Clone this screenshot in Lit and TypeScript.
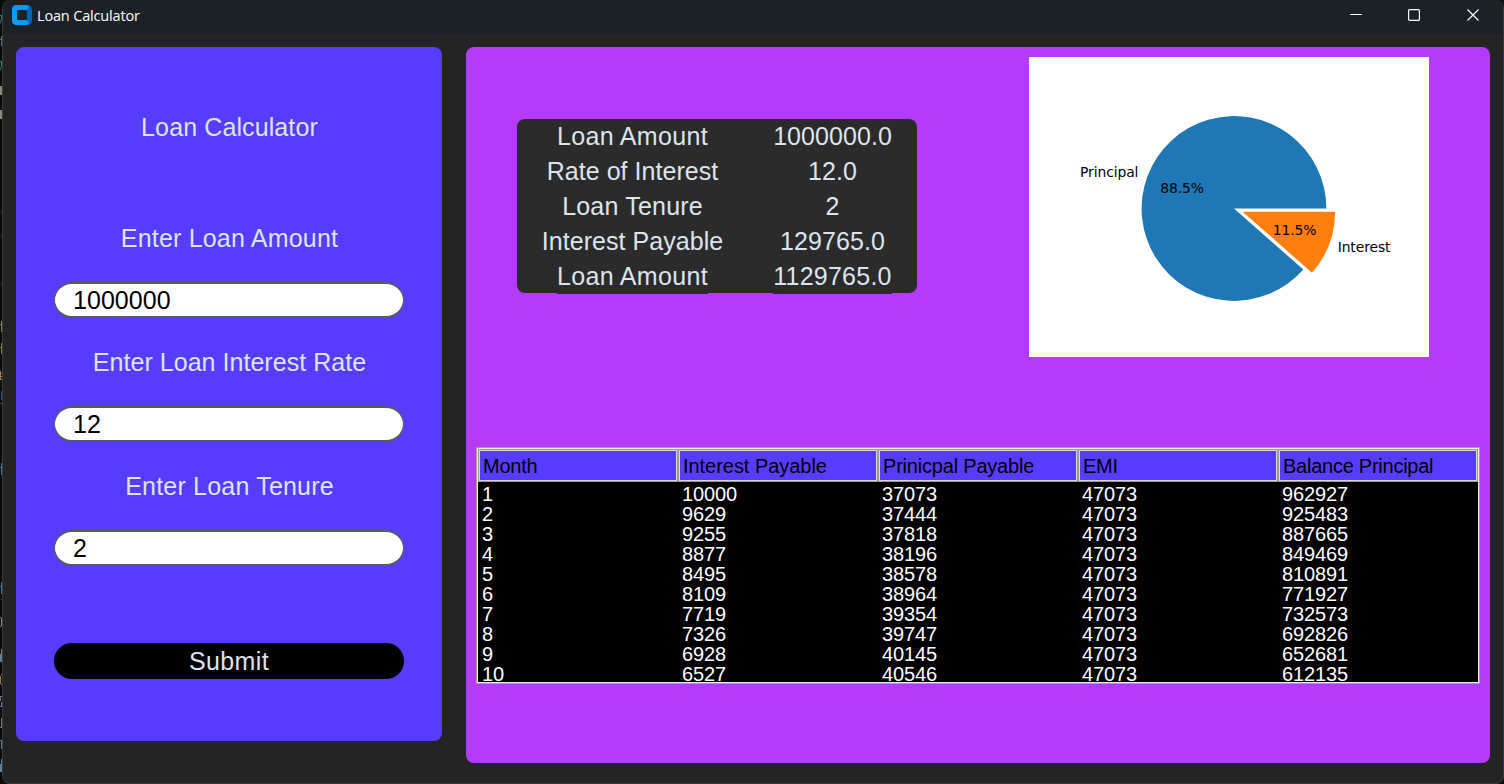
import { LitElement, html, css, svg } from "lit";
import { customElement, property } from "lit/decorators.js";

const ROWS: number[][] = [
  [1, 10000, 37073, 47073, 962927],
  [2, 9629, 37444, 47073, 925483],
  [3, 9255, 37818, 47073, 887665],
  [4, 8877, 38196, 47073, 849469],
  [5, 8495, 38578, 47073, 810891],
  [6, 8109, 38964, 47073, 771927],
  [7, 7719, 39354, 47073, 732573],
  [8, 7326, 39747, 47073, 692826],
  [9, 6928, 40145, 47073, 652681],
  [10, 6527, 40546, 47073, 612135],
];
const COLUMNS = ["Month", "Interest Payable", "Prinicpal Payable", "EMI", "Balance Principal"];
const SUMMARY = [
  ["Loan Amount", "1000000.0"],
  ["Rate of Interest", "12.0"],
  ["Loan Tenure", "2"],
  ["Interest Payable", "129765.0"],
  ["Loan Amount", "1129765.0"],
];
const FIELDS = [
  ["Enter Loan Amount", "1000000"],
  ["Enter Loan Interest Rate", "12"],
  ["Enter Loan Tenure", "2"],
];

// Slivers of the editor window behind: path, colour
const SLIVERS: [string, string][] = [
  ["M0 15.5H2M1.5 16V19L0 23.5", "#2f7f80"],
  ["M0 39.5H2M1.5 36V46", "#5b7286"],
  ["M0 61.5H2M1.5 62V66L0 70.5", "#2f7f80"],
  ["M0 86.5H2M.5 86V95M1.5 87V95", "#8d8a7a"],
  ["M0 110.5H2M.5 110V119M1.5 111V119", "#8d8a7a"],
  ["M1 212.5H2M1 236.5H2M1 283.5H2", "#27527c"],
  ["M0 324.5H2M1.5 321V332", "#8b784e"],
  ["M0 347.5H2M1.5 343V354", "#8b784e"],
  ["M.5 371V380M1 373.5H2M0 376.5H2M1 379.5H2", "#9a7f50"],
  ["M1.5 391V400M0 403.5H2", "#2d4f80"],
  ["M0 467.5H2M1.5 463V475", "#3f6f98"],
  ["M0 586.5H2M1.5 582V594", "#3f6f98"],
  ["M0 599.5H2", "#2a2a2a"],
  ["M0 617.5H1M1.5 618V626M0 626.5H1", "#9a886b"],
  ["M1.5 649V662M.5 654V662", "#657f95"],
  ["M.5 676V684M1 674.5H2M1 684.5H2", "#9a7f50"],
  ["M0 696.5H2M.5 697V701M1.5 702V706M0 706.5H2", "#707798"],
  ["M1.5 718V728M0 727.5H2", "#657f95"],
  ["M1.5 740V749M0 740.5H2", "#657f95"],
  ["M1.5 759V772M.5 764V772", "#657f95"],
];

@customElement("title-bar")
export class TitleBar extends LitElement {
  static styles = css`
    :host {
      display: flex;
      height: 34px;
      background: #1c2127;
      color: #fff;
      font: 14.5px/20px "Open Sans", "Noto Sans", sans-serif;
    }
    .logo { width: 20px; height: 20px; margin: 5px 5px 0 9px; flex: none; }
    .name { flex: 1; margin-top: 6px; letter-spacing: -0.16px; }
    .controls { display: flex; gap: 46px; margin: 9px 24px 0 0; }
    .controls svg { width: 12px; height: 12px; }
    .controls .close { margin-left: 1px; }
  `;
  render() {
    return html`
      <svg class="logo" viewBox="0 0 20 20">
        <rect width="20" height="20" rx="4.5" fill="#0460b3" />
        <path d="M4.5 0H14.5a2.2 2.2 0 0 1 2 3.2V16.8a2.2 2.2 0 0 1-2 3.2H4.5A4.5 4.5 0 0 1 0 15.5V4.5A4.5 4.5 0 0 1 4.5 0Z" fill="#079bff" />
        <path d="M14.5 4.5L16.5 3V17L14.5 15.5Z" fill="#0460b3" />
        <rect x="5" y="5" width="10" height="10" rx="1.5" fill="#1d2228" />
      </svg>
      <span class="name">Loan Calculator</span>
      <div class="controls">
        <svg viewBox="0 0 12 12"><path d="M0 5.5H12" stroke="#fff" /></svg>
        <svg viewBox="0 0 12 12"><rect x=".6" y=".6" width="10.8" height="10.8" rx="1" fill="none" stroke="#fff" stroke-width="1.2" /></svg>
        <svg class="close" viewBox="0 0 12 12"><path d="M.5.5L11.5 11.5M11.5.5L.5 11.5" stroke="#fff" stroke-width="1.15" /></svg>
      </div>
    `;
  }
}

@customElement("loan-form")
export class LoanForm extends LitElement {
  static styles = css`
    :host {
      display: flex;
      flex-direction: column;
      box-sizing: border-box;
      width: 426px;
      height: 694px;
      padding: 66px 38px 0;
      border-radius: 8px;
      background: #573dfb;
      color: #dce4ee;
      font: 25px/28px "Liberation Sans", Arial, sans-serif;
      text-align: center;
    }
    .heading { margin-bottom: 83px; padding-left: 1px; letter-spacing: 0.11px; }
    .fields { display: flex; flex-direction: column; gap: 30px; }
    .field { display: flex; flex-direction: column; gap: 30px; letter-spacing: 0.2px; }
    .field:nth-child(2) { letter-spacing: 0.04px; }
    .label { padding-left: 1px; }
    .entry {
      box-sizing: border-box;
      width: 350px;
      height: 36px;
      border: 2px solid #565b5e;
      border-left-width: 1px;
      border-right-width: 1px;
      border-radius: 18px;
      padding: 0 18px;
      background: #fff;
      color: #000;
      font: 25px/32px "Liberation Sans", Arial, sans-serif;
      letter-spacing: 0.05px;
      outline: none;
    }
    .submit {
      height: 36px;
      margin-top: 77px;
      border: 0;
      border-radius: 18px;
      padding: 0;
      background: #000;
      color: #dce4ee;
      font: 25px/36px "Liberation Sans", Arial, sans-serif;
      letter-spacing: 0.4px;
    }
  `;
  render() {
    return html`
      <div class="heading">Loan Calculator</div>
      <div class="fields">
        ${FIELDS.map(
          ([label, value]) => html`<label class="field"><span class="label">${label}</span><input class="entry" .value=${value} /></label>`
        )}
      </div>
      <button class="submit">Submit</button>
    `;
  }
}

@customElement("loan-summary")
export class LoanSummary extends LitElement {
  static styles = css`
    :host {
      display: block;
      width: 400px;
      height: 174px;
      border-radius: 8px;
      background: #2b2b2b;
      color: #dce4ee;
      font: 25px/35px "Liberation Sans", Arial, sans-serif;
    }
    .row { display: grid; grid-template-columns: 231px 169px; justify-items: center; height: 35px; }
    .row:last-child span { background: #2b2b2b; }
    .key { letter-spacing: 0.05px; }
    .row:nth-child(3) .key { letter-spacing: 0.2px; }
    .row:first-child .key, .row:last-child .key { letter-spacing: 0.34px; }
    .value { letter-spacing: 0.06px; }
    .row:last-child .value { letter-spacing: 0.25px; }
  `;
  render() {
    return SUMMARY.map(
      ([k, v]) => html`<div class="row"><span class="key">${k}</span><span class="value">${v}</span></div>`
    );
  }
}

@customElement("share-chart")
export class ShareChart extends LitElement {
  @property({ type: Number }) principal = 1000000;
  @property({ type: Number }) interest = 129765;
  static styles = css`
    :host { display: block; width: 400px; height: 300px; background: #fff; }
    .chart { display: block; width: 400px; height: 300px; }
    .text { font: 13.89px "DejaVu Sans", sans-serif; letter-spacing: -0.1px; fill: #000; }
  `;
  render() {
    const r = 92.4;
    const cx = 205;
    const cy = 151.5;
    const a = (2 * Math.PI * this.interest) / (this.principal + this.interest);
    const ex = cx + 0.1 * r * Math.cos(a / 2);
    const ey = cy + 0.1 * r * Math.sin(a / 2);
    const dx = r * Math.cos(a);
    const dy = r * Math.sin(a);
    return html`<svg class="chart" viewBox="0 0 400 300">
      ${svg`
        <path fill="#1f77b4" d="M${cx} ${cy}H${cx + r}A${r} ${r} 0 1 0 ${cx + dx} ${cy + dy}Z" />
        <path fill="#ff7f0e" d="M${ex} ${ey}H${ex + r}A${r} ${r} 0 0 1 ${ex + dx} ${ey + dy}Z" />
        <text class="text" x="109.3" y="120" text-anchor="end">Principal</text>
        <text class="text" x="153" y="136" text-anchor="middle">88.5%</text>
        <text class="text" x="265.5" y="178" text-anchor="middle">11.5%</text>
        <text class="text" x="308.7" y="195">Interest</text>
      `}
    </svg>`;
  }
}

@customElement("payment-table")
export class PaymentTable extends LitElement {
  static styles = css`
    :host {
      display: block;
      box-sizing: border-box;
      width: 1004px;
      height: 237px;
      border: 1px solid #a09f98;
      background: #000;
      color: #fff;
      font: 20px/20px "Liberation Sans", Arial, sans-serif;
    }
    .inner {
      box-sizing: border-box;
      height: 235px;
      border: 1px solid #f0eee0;
    }
    .row { display: grid; grid-template-columns: repeat(5, 200px); }
    .head { color: #000; margin-bottom: 2px; }
    .hcell {
      box-sizing: border-box;
      height: 33px;
      border: 1px solid #9c9a92;
      box-shadow: inset 0 0 0 1px #dcdad0;
      background: #573dfb;
      padding-left: 4px;
      line-height: 32px;
      letter-spacing: -0.25px;
    }
    .hcell:nth-child(2) { letter-spacing: -0.04px; }
    .hcell:nth-child(3) { letter-spacing: -0.2px; }
    .cell { height: 20px; padding-left: 4px; letter-spacing: -0.12px; }
  `;
  render() {
    return html`<div class="inner">
      <div class="row head">${COLUMNS.map((c) => html`<div class="hcell">${c}</div>`)}</div>
      ${ROWS.map((r) => html`<div class="row">${r.map((v) => html`<div class="cell">${v}</div>`)}</div>`)}
    </div>`;
  }
}

@customElement("app-root")
export class AppRoot extends LitElement {
  static styles = css`
    :host { display: flex; width: 1504px; height: 784px; background: #0b0b0c; overflow: hidden; }
    .behind { width: 2px; height: 784px; flex: none; }
    .window {
      flex: 1;
      box-sizing: border-box;
      height: 784px;
      border: solid #3b3b3c;
      border-width: 0 1px 1px 1px;
      border-radius: 8px;
      background: #242424;
      overflow: hidden;
    }
    .body { display: flex; gap: 24px; padding: 13px 13px 0; align-items: flex-start; }
    .results {
      box-sizing: border-box;
      width: 1024px;
      height: 716px;
      flex: none;
      padding: 10px;
      border-radius: 8px;
      background: #b43bfa;
    }
    .top { display: flex; justify-content: space-between; padding: 0 51px 0 41px; margin-bottom: 90px; }
    .summary { margin-top: 62px; }
  `;
  render() {
    return html`
      <svg class="behind" viewBox="0 0 2 784">
        ${SLIVERS.map(([d, c]) => svg`<path d=${d} stroke=${c} fill="none" />`)}
      </svg>
      <div class="window">
        <title-bar></title-bar>
        <div class="body">
          <loan-form></loan-form>
          <div class="results">
            <div class="top">
              <loan-summary class="summary"></loan-summary>
              <share-chart></share-chart>
            </div>
            <payment-table></payment-table>
          </div>
        </div>
      </div>
    `;
  }
}
